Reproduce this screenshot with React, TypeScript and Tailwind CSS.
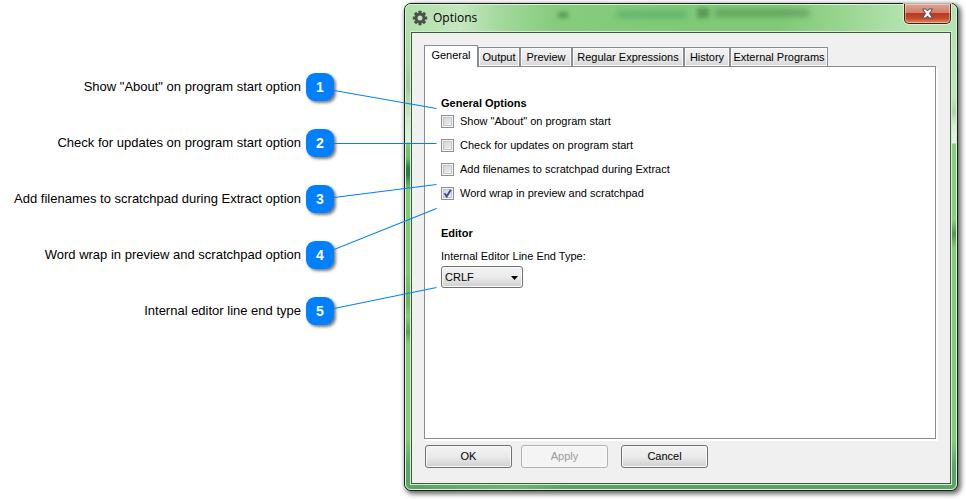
import React, { useState } from 'react';

const callouts = [
    { label: 'Show "About" on program start option', y1: 17, y2: 35 },
    { label: 'Check for updates on program start option', y1: 70, y2: 70 },
    { label: 'Add filenames to scratchpad during Extract option', y1: 124, y2: 111 },
    { label: 'Word wrap in preview and scratchpad option', y1: 176, y2: 135 },
    { label: 'Internal editor line end type', y1: 235, y2: 214 },
];

const tabs = [
    { name: 'General', width: 'w-[54px]' },
    { name: 'Output', width: 'w-[42px]' },
    { name: 'Preview', width: 'w-[52px]' },
    { name: 'Regular Expressions', width: 'w-[112px]' },
    { name: 'History', width: 'w-[46px]' },
    { name: 'External Programs', width: 'w-[98px]' },
];

const options = [
    { id: 'about', label: 'Show "About" on program start', checked: false },
    { id: 'updates', label: 'Check for updates on program start', checked: false },
    { id: 'filenames', label: 'Add filenames to scratchpad during Extract', checked: false },
    { id: 'wrap', label: 'Word wrap in preview and scratchpad', checked: true },
];

const GearIcon: React.FC = () => (
    <svg width="16" height="16" viewBox="0 0 16 16" className="shrink-0">
        <g fill="#4c4f4c">
            {[0, 45, 90, 135].map(a => (
                <rect key={a} x="6.4" y="0.8" width="3.2" height="14.4" rx="0.4" transform={`rotate(${a} 8 8)`} />
            ))}
        </g>
        <circle cx="8" cy="8" r="3.9" fill="none" stroke="#4c4f4c" strokeWidth="2.8" />
        <circle cx="8" cy="8" r="2.5" fill="#c3e2be" />
    </svg>
);

const CloseIcon: React.FC = () => (
    <svg width="13" height="11" viewBox="0 0 13 11">
        <path
            d="M1.5 1h3.4l1.6 2 1.6-2h3.4L8.500 5.500l3 4.500H8.100L6.500 8 4.900 10H1.500l3-4.500z"
            fill="#f4f4f4"
            stroke="#4b4e5c"
            strokeWidth="1"
            strokeLinejoin="round"
        />
    </svg>
);

const Callouts: React.FC = () => (
    <div className="relative z-10 w-[334px] shrink-0 pt-[73px]">
        <ol className="flex flex-col gap-7">
            {callouts.map((c, i) => (
                <li key={c.label} className="flex h-7 items-center justify-end gap-[5px] text-[13px] whitespace-nowrap text-black">
                    <span>{c.label}</span>
                    <span className="flex size-7 items-center justify-center rounded-[9px] bg-[#0080ff] text-[14px] font-bold text-white shadow-[2px_2px_3px_rgba(0,0,0,0.5)]">
                        {i + 1}
                    </span>
                </li>
            ))}
        </ol>
        {/* Pointer lines over the dialog */}
        <svg className="pointer-events-none absolute top-[73px] left-full" width="104" height="260">
            {callouts.map(c => (
                <path key={c.label} d={`M0 ${c.y1 + 0.5}L102.5 ${c.y2 + 0.5}`} fill="none" stroke="#0080ff" strokeWidth="1.1" />
            ))}
        </svg>
    </div>
);

const buttonClass =
    'h-[23px] w-[87px] rounded-[3px] border border-[#707070] bg-linear-to-b from-[#f2f2f2] from-0% via-[#ebebeb] via-50% to-[#cfcfcf] shadow-[inset_0_0_0_1px_#fafafa] disabled:border-[#adb2b5] disabled:bg-none disabled:bg-[#f4f4f4] disabled:text-[#9a9a9a]';

const OptionsDialog: React.FC = () => {
    const [active, setActive] = useState('General');

    return (
        <section
            aria-label="Options"
            className="relative mt-[3px] mr-2 mb-2 ml-[70px] min-w-0 flex-1 rounded-[7px] border border-[#14201a] bg-[#83cc7a] px-[6px] pb-[6px] text-[11px] text-black shadow-[2px_2px_5px_1px_rgba(0,0,0,0.6)]
            [background-image:linear-gradient(90deg,#b0dfaa_0%,#c4e7bf_10%,#a4d99e_17%,#86cc7d_27%,#80ca76_50%,#80ca76_68%,#9ad692_80%,#b8e4b2_92%,#b4e2ae_100%),linear-gradient(90deg,#5ba368,#6fb274_20%,#5ba368_30%,#5ba368),linear-gradient(#b0dfaa_0px,#aadba4_30px,#a0c89a_54px,#cbe8c7_85px,#e0f2de_110px,#82cb78_111px,#72bc6c_126px,#2a7a48_136px,#2a7a48_143px,#82cb78_158px,#80c878_240px,#6db266_270px,#83cc7a_285px,#629b5c_300px,#83cc7a_312px,#83cc7a_405px,#5ba368_435px),linear-gradient(#b4e2ae_0px,#bfe8ba_65px,#b0d0ac_80px,#d8f0d5_94px,#e4f4e2_111px,#86d07e_112px,#86d07e_188px,#5d9156_202px,#83cc7a_216px,#83cc7a_410px,#5ba368_435px)]
            [background-size:100%_28px,100%_7px,8px_100%,8px_100%] [background-position:left_top,left_bottom,left_28px,right_28px] bg-no-repeat"
        >
            <div className="pointer-events-none absolute inset-0 rounded-[6px] border border-[#dcf3d9]" />

            {/* Title bar */}
            <header className="relative flex h-7 items-center gap-[5px] overflow-hidden pl-px font-['Open_Sans','Noto_Sans',sans-serif] text-[12px]">
                <GearIcon />
                <h1>Options</h1>
                <div aria-hidden="true" className="absolute top-[8px] left-[147px] h-[6px] w-[10px] bg-[#3c7a42] opacity-60 blur-[2px]" />
                <div aria-hidden="true" className="absolute top-[7px] left-[206px] h-[7px] w-[70px] bg-[#3f9a68] opacity-50 blur-[3px]" />
                <div aria-hidden="true" className="absolute top-[4px] left-[286px] h-[10px] w-[12px] bg-[#356b3a] opacity-50 blur-[2px]" />
                <div aria-hidden="true" className="absolute top-[6px] left-[304px] h-[6px] w-[94px] bg-[#356b3a] opacity-50 blur-[3px]" />
            </header>
            <button
                type="button"
                aria-label="Close"
                className="absolute top-0 right-[6px] flex h-[20px] w-[47px] items-center justify-center rounded-b-[5px] border border-t-0 border-[#4a1c14] bg-[linear-gradient(#e0a392_0%,#d0806c_45%,#b83a20_50%,#c14a2a_75%,#e08a60_100%)] shadow-[inset_0_0_0_1px_rgba(255,255,255,0.4),0_0_0_1px_rgba(235,250,232,0.7)]"
            >
                <CloseIcon />
            </button>

            {/* Client area */}
            <div className="relative border border-[#3a5a3c] bg-[#f0f0f0] px-3 pt-3 pb-[15px] shadow-[0_0_0_1px_#d2f0ce]">
                <div role="tablist" className="flex items-end">
                    {tabs.map(tab => (
                        <button
                            key={tab.name}
                            type="button"
                            role="tab"
                            aria-selected={tab.name === active}
                            onClick={() => setActive(tab.name)}
                            className={`${tab.width} ${
                                tab.name === active
                                    ? 'relative z-10 -mb-px h-[22px] border border-b-0 border-[#898c95] bg-white pb-[2px] whitespace-nowrap'
                                    : 'h-[19px] border border-b-0 border-[#898c95] bg-linear-to-b from-[#f3f3f3] from-0% via-[#ebebeb] via-50% to-[#d6d6d6] whitespace-nowrap shadow-[inset_0_0_0_1px_#fafafa]'
                            }`}
                        >
                            {tab.name}
                        </button>
                    ))}
                </div>

                <div role="tabpanel" className="mr-[2px] h-[373px] border border-[#898c95] bg-white px-4 pt-7 shadow-[2px_2px_0_#fff]">
                    <h2 className="h-4 leading-4 font-bold">General Options</h2>
                    <div className="-mt-[2px] flex flex-col">
                        {options.map(o => (
                            <div key={o.id} className="relative flex h-6 items-center gap-[6px]">
                                <input
                                    id={o.id}
                                    type="checkbox"
                                    defaultChecked={o.checked}
                                    className="peer size-[13px] appearance-none border border-[#8e8f8f] bg-[linear-gradient(135deg,#cbcfd5,#f6f6f6)] shadow-[inset_0_0_0_1px_#f4f4f4,inset_0_0_0_2px_#c3c6cb]"
                                />
                                <svg
                                    viewBox="0 0 13 13"
                                    className="pointer-events-none absolute left-0 hidden size-[13px] peer-checked:block"
                                    fill="none"
                                    stroke="#3a4f9c"
                                    strokeWidth="2"
                                >
                                    <path d="M3.500 6.300l2.200 3.200L9.800 2.800" />
                                </svg>
                                <label htmlFor={o.id}>{o.label}</label>
                            </div>
                        ))}
                    </div>

                    <h2 className="mt-5 h-4 leading-4 font-bold">Editor</h2>
                    <label htmlFor="line-end" className="mt-[7px] block h-4 leading-4">
                        Internal Editor Line End Type:
                    </label>
                    <div className="relative mt-[2px] w-[82px]">
                        <select
                            id="line-end"
                            defaultValue="CRLF"
                            className="h-[22px] w-full appearance-none rounded-[3px] border border-[#707070] bg-linear-to-b from-[#f2f2f2] from-0% via-[#ebebeb] via-50% to-[#cfcfcf] pl-[3px] shadow-[inset_0_0_0_1px_#fafafa]"
                        >
                            <option>CRLF</option>
                            <option>LF</option>
                            <option>CR</option>
                        </select>
                        <svg className="pointer-events-none absolute top-[10px] right-[5px]" width="7" height="4" viewBox="0 0 7 4">
                            <path d="M0 0h7L3.500 4z" fill="#000" />
                        </svg>
                    </div>
                </div>

                {/* Dialog buttons */}
                <div className="mt-[6px] flex pl-px">
                    <button type="button" className={buttonClass}>OK</button>
                    <button type="button" disabled className={`${buttonClass} ml-[9px]`}>Apply</button>
                    <button type="button" className={`${buttonClass} ml-[13px]`}>Cancel</button>
                </div>
            </div>
        </section>
    );
};

const App: React.FC = () => {
    return (
        <main className="flex min-h-screen items-start bg-white font-['Liberation_Sans',Arial,sans-serif]">
            <Callouts />
            <OptionsDialog />
        </main>
    );
};

export default App;
